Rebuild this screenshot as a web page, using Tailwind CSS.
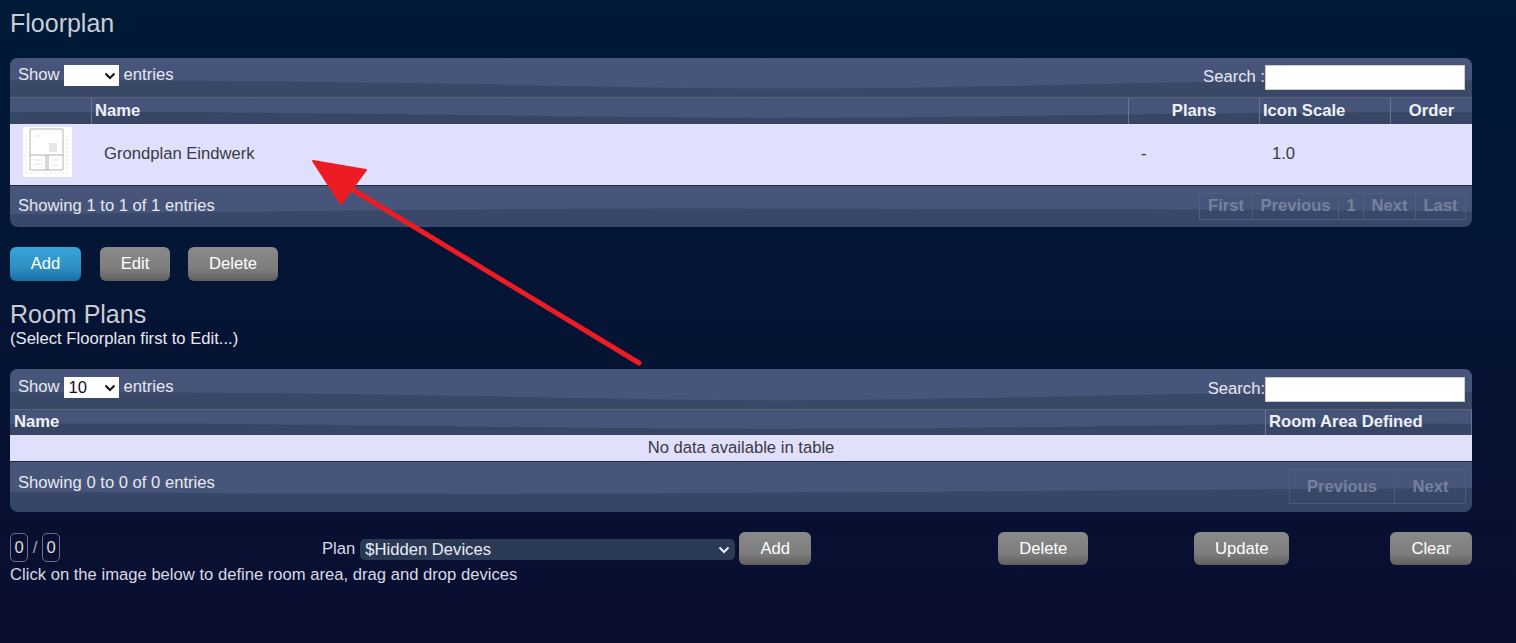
<!DOCTYPE html>
<html><head><meta charset="utf-8"><script src="https://cdn.jsdelivr.net/npm/@tailwindcss/browser@4"></script></head>
<body class="m-0 h-[643px] overflow-hidden font-['Liberation_Sans',Arial,sans-serif] text-[16.64px] text-[#e8e8f0] bg-[linear-gradient(180deg,#001a38_0%,#0a0e30_100%)]">
<div class="relative h-[643px] px-[10px] pt-[9px]">
  <h2 class="text-[25px] leading-[28px] text-[#c9ced6] m-0">Floorplan</h2>

  <section class="mt-[21px] w-[1462px] h-[169px] rounded-[8px] overflow-hidden">
    <div class="relative h-[39px] bg-[linear-gradient(180deg,#3b4969_0%,#3a4868_100%)]">
      <svg class="absolute inset-0 w-full h-full" viewBox="0 0 1462 100" preserveAspectRatio="none"><path d="M0 0H1462V58C1200 52 1000 78 780 78 560 78 400 56 0 58Z" fill="#47557a"/></svg>
      <div class="relative flex justify-between h-full pl-[8px] pr-[7px]">
        <div class="flex items-start pt-[6px] leading-[21px]"><span>Show</span>
          <span class="ml-[4px] mt-[1px] w-[55px] h-[21px] bg-white flex items-center justify-end pr-[3px]"><svg width="12" height="8" viewBox="0 0 12 8"><path d="M1.5 1.5 6 6l4.5-4.5" fill="none" stroke="#111" stroke-width="2"/></svg></span>
          <span class="ml-[5px]">entries</span></div>
        <div class="flex items-start pt-[7px] leading-[24px]"><span>Search :</span><span class="w-[200px] h-[25px] bg-white border border-[#ccc] block"></span></div>
      </div>
    </div>
    <div class="relative h-[27px] border-t border-[#5a6378] font-bold text-[#eef0f6] bg-[#384666]">
      <svg class="absolute inset-0 w-full h-full" viewBox="0 0 1462 100" preserveAspectRatio="none"><path d="M0 0H1462V55C1200 50 1000 80 700 75 500 72 300 50 0 55Z" fill="#46547a"/></svg>
      <div class="relative grid grid-cols-[82px_1fr_131px_131px_81px] h-full leading-[25px]">
        <div class="border-r border-[#6a7590]"></div>
        <div class="pl-[3px] border-r border-[#6a7590]">Name</div>
        <div class="text-center border-r border-[#6a7590]">Plans</div>
        <div class="pl-[3px] border-r border-[#6a7590]">Icon Scale</div>
        <div class="text-center">Order</div>
      </div>
    </div>
    <div class="grid grid-cols-[82px_1fr_131px_131px_81px] h-[62px] bg-[#e0e0fc] text-[#3a3a44] border-b border-[#202a40] leading-[60px]">
      <div class="pl-[13px] pt-[3px]"><div class="w-[49px] h-[50px] bg-white">
        <svg class="block" width="49" height="50" viewBox="0 0 49 50" fill="none"><path d="M7 2H40V43H7z" stroke="#b4b4b4" stroke-width="1"/><path d="M7 28H40M23 28V43M25 28V43" stroke="#a0a0a0" stroke-width="0.8"/><path d="M26 16h8v9h-8z" fill="#e6e6e6"/><path d="M12 9h5M11 33h8M29 33h7M11 37h8M29 38h6" stroke="#e0e0e0" stroke-width="1"/><path d="M3 46H45M3 8V42M44 8V42" stroke="#e4e4e4" stroke-width="1" stroke-dasharray="2 2"/></svg></div></div>
      <div class="pl-[12px]">Grondplan Eindwerk</div>
      <div class="pl-[12px]">-</div>
      <div class="pl-[12px]">1.0</div>
      <div></div>
    </div>
    <div class="relative h-[41px] bg-[linear-gradient(180deg,#3b4969_0%,#38476a_100%)]">
      <svg class="absolute inset-0 w-full h-full" viewBox="0 0 1462 100" preserveAspectRatio="none"><path d="M0 0H1462V62C1200 56 1000 58 700 55 500 55 300 62 0 68Z" fill="#47557a"/></svg>
      <div class="relative flex justify-between h-full pl-[8px] pr-[6px]">
        <span class="pt-[10px] leading-[20px]">Showing 1 to 1 of 1 entries</span>
        <div class="flex mt-[7px] h-[27px] border border-[#515e80] font-bold text-[#76819b] leading-[24px] text-center">
          <span class="w-[53px] border-r border-[#515e80]">First</span><span class="w-[86px] border-r border-[#515e80]">Previous</span><span class="w-[25px] border-r border-[#515e80]">1</span><span class="w-[52px] border-r border-[#515e80]">Next</span><span class="w-[49px]">Last</span>
        </div>
      </div>
    </div>
  </section>

  <div class="flex mt-[20px] h-[34px] leading-[33px] text-white text-center">
    <span class="w-[71px] rounded-[6px] bg-[linear-gradient(180deg,#37a5d8_0%,#2f8fc2_60%,#1a6ea6_100%)]">Add</span>
    <span class="ml-[19px] w-[70px] rounded-[6px] bg-[linear-gradient(180deg,#8a8a8a_0%,#7d7d7d_65%,#5f5f5f_100%)]">Edit</span>
    <span class="ml-[18px] w-[90px] rounded-[6px] bg-[linear-gradient(180deg,#8a8a8a_0%,#7d7d7d_65%,#5f5f5f_100%)]">Delete</span>
  </div>

  <h2 class="mt-[19px] text-[25px] leading-[28px] text-[#c9ced6] m-0">Room Plans</h2>
  <p class="leading-[20px] pt-[1px] m-0">(Select Floorplan first to Edit...)</p>

  <section class="mt-[20px] w-[1462px] h-[143px] rounded-[8px] overflow-hidden">
    <div class="relative h-[40px] bg-[linear-gradient(180deg,#3b4969_0%,#3a4868_100%)]">
      <svg class="absolute inset-0 w-full h-full" viewBox="0 0 1462 100" preserveAspectRatio="none"><path d="M0 0H1462V58C1200 52 1000 78 780 78 560 78 400 56 0 58Z" fill="#47557a"/></svg>
      <div class="relative flex justify-between h-full pl-[8px] pr-[7px]">
        <div class="flex items-start pt-[7px] leading-[21px]"><span>Show</span>
          <span class="ml-[4px] mt-[1px] w-[55px] h-[21px] bg-white text-[#111] flex items-center justify-between pl-[5px] pr-[3px]">10<svg width="12" height="8" viewBox="0 0 12 8"><path d="M1.5 1.5 6 6l4.5-4.5" fill="none" stroke="#111" stroke-width="2"/></svg></span>
          <span class="ml-[5px]">entries</span></div>
        <div class="flex items-start pt-[8px] leading-[23px]"><span>Search:</span><span class="w-[200px] h-[25px] bg-white border border-[#ccc] block"></span></div>
      </div>
    </div>
    <div class="relative h-[26px] border-t border-[#5a6378] font-bold text-[#eef0f6] bg-[#384666]">
      <svg class="absolute inset-0 w-full h-full" viewBox="0 0 1462 100" preserveAspectRatio="none"><path d="M0 0H1462V55C1200 50 1000 80 700 75 500 72 300 50 0 55Z" fill="#46547a"/></svg>
      <div class="relative grid grid-cols-[1fr_206px] h-full leading-[24px]">
        <div class="pl-[4px] border-r border-[#6a7590]">Name</div>
        <div class="pl-[3px] border-r border-[#6a7590]">Room Area Defined</div>
      </div>
    </div>
    <div class="h-[27px] bg-[#e0e0fc] text-[#3a3a44] border-b border-[#202a40] text-center leading-[25px]">No data available in table</div>
    <div class="relative h-[50px] bg-[linear-gradient(180deg,#3b4969_0%,#344668_100%)]">
      <svg class="absolute inset-0 w-full h-full" viewBox="0 0 1462 100" preserveAspectRatio="none"><path d="M0 0H1462V52C1300 54 1000 58 700 62 500 64 300 64 0 60Z" fill="#47557a"/></svg>
      <div class="relative flex justify-between h-full pl-[8px] pr-[6px]">
        <span class="pt-[11px] leading-[20px]">Showing 0 to 0 of 0 entries</span>
        <div class="flex mt-[7px] h-[35px] border border-[#4c5a7c] font-bold text-[#76819b] leading-[33px] text-center">
          <span class="w-[105px] border-r border-[#4c5a7c]">Previous</span><span class="w-[70px] pl-[1px]">Next</span>
        </div>
      </div>
    </div>
  </section>

  <div class="flex items-start mt-[20px] h-[34px]">
    <span class="mt-[1px] w-[18px] h-[29px] rounded-[5px] border border-[#6b7280] text-center leading-[27px] text-[#ddd]">0</span>
    <span class="mt-[1px] w-[14px] text-center leading-[29px] text-[#aaa]">/</span>
    <span class="mt-[1px] w-[18px] h-[29px] rounded-[5px] border border-[#6b7280] text-center leading-[27px] text-[#ddd]">0</span>
    <span class="ml-[262px] mt-[7px] leading-[20px] text-[#d8dae6]">Plan</span>
    <span class="ml-[5px] mt-[7px] w-[375px] h-[21px] rounded-[5px] bg-[#2a3a55] flex items-center justify-between pl-[5px] pr-[5px] text-[#e8ecf4]"><span class="pt-[1px]">$Hidden Devices</span><svg width="12" height="8" viewBox="0 0 12 8"><path d="M1.5 1.5 6 6l4.5-4.5" fill="none" stroke="#e8ecf4" stroke-width="2"/></svg></span>
    <span class="ml-[4px] w-[72px] h-[33px] rounded-[6px] leading-[33px] text-center text-white bg-[linear-gradient(180deg,#8a8a8a_0%,#7d7d7d_65%,#5f5f5f_100%)]">Add</span>
    <span class="ml-[187px] w-[90px] h-[33px] rounded-[6px] leading-[33px] text-center text-white bg-[linear-gradient(180deg,#8a8a8a_0%,#7d7d7d_65%,#5f5f5f_100%)]">Delete</span>
    <span class="ml-[106px] w-[95px] h-[33px] rounded-[6px] leading-[33px] text-center text-white bg-[linear-gradient(180deg,#8a8a8a_0%,#7d7d7d_65%,#5f5f5f_100%)]">Update</span>
    <span class="ml-[101px] w-[82px] h-[33px] rounded-[6px] leading-[33px] text-center text-white bg-[linear-gradient(180deg,#8a8a8a_0%,#7d7d7d_65%,#5f5f5f_100%)]">Clear</span>
  </div>
  <p class="-mt-[1px] leading-[20px] m-0 text-[#d8dae6]">Click on the image below to define room area, drag and drop devices</p>

  <svg class="absolute left-0 top-0 pointer-events-none" width="1516" height="643" viewBox="0 0 1516 643">
    <path d="M639 363 345 185" stroke="#ed1c24" stroke-width="5" stroke-linecap="round"/>
    <path d="M313 161 366 170 341 204Z" fill="#ed1c24" stroke="#ed1c24" stroke-width="2" stroke-linejoin="round"/>
  </svg>
</div>
</body></html>
